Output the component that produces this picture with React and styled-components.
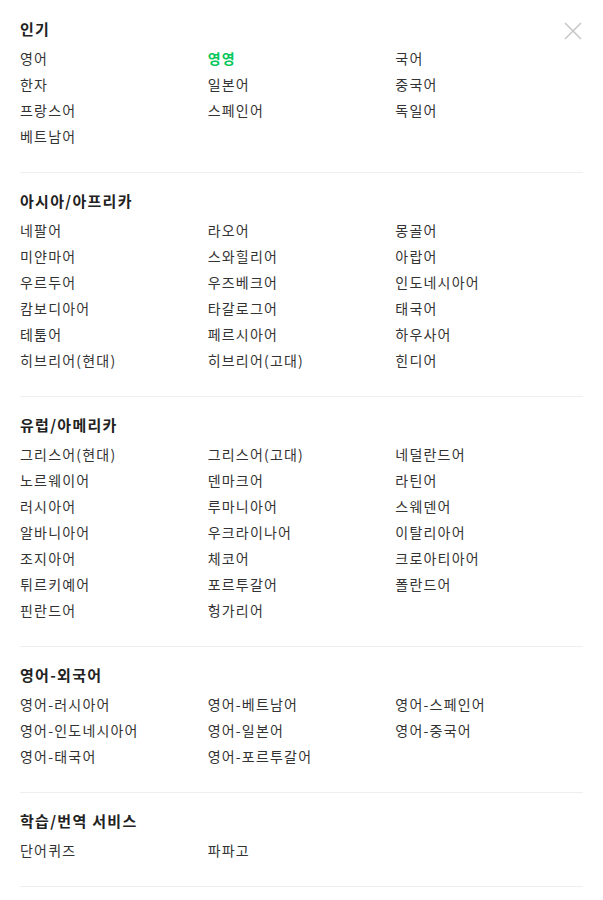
import React from "react";
import styled, { createGlobalStyle } from "styled-components";

const GlobalStyle = createGlobalStyle`
    html, body {
        margin:0;
        padding:0;
        background:#fff;
    }
    body {
        font-family:"Noto Sans CJK KR", "Noto Sans", sans-serif;
        color:#333;
    }
`;

const Panel = styled.div`
    position:relative;
    width:603px;
    padding:1px 20px 0;
    box-sizing:border-box;
`;

const CloseButton = styled.button`
    position:absolute;
    top:21px;
    right:20px;
    width:20px;
    height:20px;
    padding:0;
    border:0;
    background:none;
    cursor:pointer;
`;

const Section = styled.section`
    padding:17px 0 23px;
    border-bottom:1px solid #eee;
`;

const Heading = styled.h3`
    margin:0 0 5px;
    font-size:15px;
    line-height:22px;
    font-weight:700;
    letter-spacing:1.3px;
    color:#222;
`;

const List = styled.ul`
    display:grid;
    grid-template-columns:repeat(3, 1fr);
    grid-auto-rows:26px;
    margin:0;
    padding:0;
    list-style:none;
`;

const Item = styled.li`
    font-size:14px;
    line-height:26px;
    letter-spacing:1.2px;
    white-space:nowrap;
    color:${props => props.highlight ? "#03c75a" : "#333"};
    font-weight:${props => props.highlight ? 700 : 400};
`;

const sections = [
    {
        title: "인기",
        items: ["영어", "영영", "국어", "한자", "일본어", "중국어", "프랑스어", "스페인어", "독일어", "베트남어"],
        highlight: "영영",
    },
    {
        title: "아시아/아프리카",
        items: ["네팔어", "라오어", "몽골어", "미얀마어", "스와힐리어", "아랍어", "우르두어", "우즈베크어", "인도네시아어",
            "캄보디아어", "타갈로그어", "태국어", "테툼어", "페르시아어", "하우사어", "히브리어(현대)", "히브리어(고대)", "힌디어"],
    },
    {
        title: "유럽/아메리카",
        items: ["그리스어(현대)", "그리스어(고대)", "네덜란드어", "노르웨이어", "덴마크어", "라틴어", "러시아어", "루마니아어",
            "스웨덴어", "알바니아어", "우크라이나어", "이탈리아어", "조지아어", "체코어", "크로아티아어", "튀르키예어",
            "포르투갈어", "폴란드어", "핀란드어", "헝가리어"],
    },
    {
        title: "영어-외국어",
        items: ["영어-러시아어", "영어-베트남어", "영어-스페인어", "영어-인도네시아어", "영어-일본어", "영어-중국어",
            "영어-태국어", "영어-포르투갈어"],
    },
    {
        title: "학습/번역 서비스",
        items: ["단어퀴즈", "파파고"],
    },
];

const CloseIcon = () =>
    <svg width="20" height="20" viewBox="0 0 20 20">
        <path d="M2 2 L18 18 M18 2 L2 18" stroke="#c8c8c8" strokeWidth="1.6" fill="none" />
    </svg>

const App = () =>
    <>
        <GlobalStyle />
        <Panel>
            <CloseButton aria-label="닫기">
                <CloseIcon />
            </CloseButton>
            {sections.map(section =>
                <Section key={section.title}>
                    <Heading>{section.title}</Heading>
                    <List>
                        {section.items.map(item =>
                            <Item key={item} highlight={item === section.highlight}>{item}</Item>
                        )}
                    </List>
                </Section>
            )}
        </Panel>
    </>

export default App;
